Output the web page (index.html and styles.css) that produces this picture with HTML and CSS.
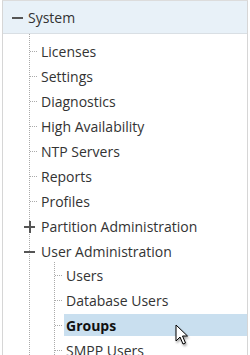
FILE: index.html
```html
<!DOCTYPE html>
<html lang="en">
<head>
  <meta charset="UTF-8">
  <title>Navigation Tree</title>
  <link rel="stylesheet" href="styles.css">
</head>
<body>

  <div class="tree-panel">
    <div class="tree-header">
      <span class="toggle minus"></span>
      <span class="label">System</span>
    </div>

    <ul class="branch">
      <li class="leaf"><span class="label">Licenses</span></li>
      <li class="leaf"><span class="label">Settings</span></li>
      <li class="leaf"><span class="label">Diagnostics</span></li>
      <li class="leaf"><span class="label">High Availability</span></li>
      <li class="leaf"><span class="label">NTP Servers</span></li>
      <li class="leaf"><span class="label">Reports</span></li>
      <li class="leaf"><span class="label">Profiles</span></li>
      <li class="node"><span class="toggle plus"></span><span class="label">Partition Administration</span></li>
      <li class="node"><span class="toggle minus"></span><span class="label">User Administration</span></li>
      <li class="sub">
        <ul class="branch nested">
          <li class="leaf"><span class="label">Users</span></li>
          <li class="leaf"><span class="label">Database Users</span></li>
          <li class="leaf selected"><span class="label">Groups</span></li>
          <li class="leaf"><span class="label">SMPP Users</span></li>
        </ul>
      </li>
    </ul>

    <!-- mouse pointer over the selected row -->
    <svg class="cursor" width="14" height="22" viewBox="0 0 14 22">
      <path d="M1 1 L1 17 L5 13 L8 20 L10.5 19 L7.5 12 L12.5 12 Z" fill="#fff" stroke="#000" stroke-width="1" stroke-linejoin="round"/>
    </svg>
  </div>

</body>
</html>
```

FILE: styles.css
```css
/* Page */
body {
  margin: 0;
  padding: 0;
  background: #fff;
  font-family: 'Open Sans', sans-serif;
  font-size: 14px;
  color: #333;
  overflow: hidden;
}
/* Tree panel */
.tree-panel {
  position: relative;
  margin-left: 2px;
  width: 244px;
  height: 355px;
  border-left: 1px solid #d6d6d6;
  border-right: 1px solid #d6d6d6;
  border-top: 1px solid #dcdcdc;
  overflow: hidden;
}
.tree-header {
  display: flex;
  align-items: center;
  height: 32px;
  padding-left: 9px;
  background: #e8f1f8;
  border-bottom: 1px solid #d9dfe4;
}
.tree-header .label {
  margin-left: 5px;
}
/* Expand / collapse signs */
.toggle {
  position: relative;
  display: inline-block;
  flex: none;
  width: 11px;
  height: 11px;
}
.toggle::before,
.toggle::after {
  content: "";
  position: absolute;
  background: #555;
}
.toggle::before {
  left: 0;
  top: 5px;
  width: 11px;
  height: 2px;
}
.plus::after {
  left: 5px;
  top: 0;
  width: 2px;
  height: 12px;
}
/* Branches */
ul.branch {
  list-style: none;
  margin: 0 0 0 26px;
  padding: 6px 0 0 0;
  border-left: 1px dotted #aaa;
}
ul.nested {
  margin-left: 24px;
  padding-top: 2px;
}
li {
  display: flex;
  align-items: center;
  height: 22px;
  margin-bottom: 3px;
}
li.sub {
  display: block;
  height: auto;
  margin: -3px 0 0 0;
}
li.leaf::before {
  content: "";
  width: 7px;
  margin-right: 4px;
  border-top: 1px dotted #aaa;
}
li.node {
  margin-left: -6px;
}
li.node .label {
  margin-left: 6px;
}
li.selected .label {
  flex: 1;
  align-self: stretch;
  display: flex;
  align-items: center;
  margin-left: -2px;
  padding-left: 2px;
  background: #c9dfef;
  font-weight: bold;
  color: #111;
}
.cursor {
  position: absolute;
  left: 172px;
  top: 323px;
  filter: drop-shadow(1px 2px 1px rgba(0, 0, 0, 0.35));
}
```
